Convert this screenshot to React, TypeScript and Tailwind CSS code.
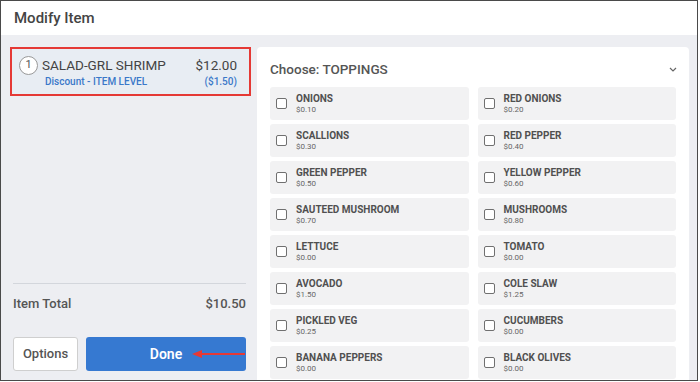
import React from "react";

interface Topping {
  name: string;
  price: string;
}

const toppings: Topping[] = [
  { name: "ONIONS", price: "$0.10" },
  { name: "RED ONIONS", price: "$0.20" },
  { name: "SCALLIONS", price: "$0.30" },
  { name: "RED PEPPER", price: "$0.40" },
  { name: "GREEN PEPPER", price: "$0.50" },
  { name: "YELLOW PEPPER", price: "$0.60" },
  { name: "SAUTEED MUSHROOM", price: "$0.70" },
  { name: "MUSHROOMS", price: "$0.80" },
  { name: "LETTUCE", price: "$0.00" },
  { name: "TOMATO", price: "$0.00" },
  { name: "AVOCADO", price: "$1.50" },
  { name: "COLE SLAW", price: "$1.25" },
  { name: "PICKLED VEG", price: "$0.25" },
  { name: "CUCUMBERS", price: "$0.00" },
  { name: "BANANA PEPPERS", price: "$0.00" },
  { name: "BLACK OLIVES", price: "$0.00" },
];

const ToppingOption: React.FC<{ topping: Topping }> = ({ topping }) => (
  <div className="h-[33px] rounded-[3px] bg-[#f2f2f3] flex items-center pl-[6px]">
    <div className="w-[11px] h-[11px] border-[1.5px] border-[#707070] rounded-[2px] bg-white shrink-0" />
    <div className="ml-[9px] flex flex-col">
      <span className="text-[10px] leading-[12px] font-bold text-[#505050]">{topping.name}</span>
      <span className="text-[8px] leading-[10px] text-[#666]">{topping.price}</span>
    </div>
  </div>
);

const App: React.FC = () => {
  return (
    <div className="w-[700px] h-[382px] bg-white overflow-hidden font-['Roboto',sans-serif]">
      <div className="w-[698px] h-[381px] border border-[#4a4a4a] flex flex-col">
        {/* header */}
        <div className="h-[34px] shrink-0 bg-white flex items-center px-[13px] text-[15px] font-medium text-[#444]">
          Modify Item
        </div>

        <div className="flex-1 min-h-0 bg-[#edeef2] flex">
          {/* left column */}
          <div className="w-[256px] shrink-0 flex flex-col pt-[12px] pl-[9px] pr-[6px] pb-[9px]">
            <div className="border-2 border-[#e53935] bg-[#e8edf3] pt-[7px] pb-[7px] pl-[7px] pr-[12px]">
              <div className="h-[19px] flex items-center">
                <div className="w-[19px] h-[19px] rounded-full border border-[#999] bg-white flex items-center justify-center text-[11px] text-[#555]">
                  1
                </div>
                <span className="ml-[4px] text-[13.5px] text-[#444]">SALAD-GRL SHRIMP</span>
                <span className="ml-auto text-[13.5px] text-[#444]">$12.00</span>
              </div>
              <div className="h-[12px] flex items-center pl-[26px] text-[10px] font-medium text-[#3a78c9]">
                <span>Discount - ITEM LEVEL</span>
                <span className="ml-auto">($1.50)</span>
              </div>
            </div>

            <div className="flex-1" />

            <div className="pl-[3px] pr-[5px]">
              <div className="h-px bg-[#d3d6dc]" />
              <div className="mt-[10px] h-[20px] flex items-center justify-between text-[13px] font-medium text-[#555]">
                <span>Item Total</span>
                <span>$10.50</span>
              </div>
              <div className="mt-[23px] flex gap-[8px]">
                <button className="w-[65px] h-[34px] bg-white border border-[#cfcfcf] rounded-[3px] text-[13px] font-medium text-[#555]">
                  Options
                </button>
                <button className="relative flex-1 h-[34px] bg-[#3679d1] rounded-[3px] text-[14px] font-semibold text-white">
                  Done
                  <svg className="absolute left-[106px] top-[12px]" width="54" height="10" viewBox="0 0 54 10">
                    <path d="M0 5 L10 1 L10 9 Z" fill="#e53935" />
                    <line x1="9" y1="5" x2="53" y2="5" stroke="#e53935" strokeWidth="2" />
                  </svg>
                </button>
              </div>
            </div>
          </div>

          {/* toppings card */}
          <div className="w-[432px] shrink-0 mt-[12px] bg-white rounded-t-[4px] px-[13px] overflow-hidden">
            <div className="h-[40px] flex items-center pt-[6px] pb-[2px]">
              <span className="text-[13.5px] font-medium text-[#555]">Choose: TOPPINGS</span>
              <svg className="ml-auto mr-[-1px]" width="8" height="5" viewBox="0 0 8 5">
                <path d="M1 1 L4 4 L7 1" fill="none" stroke="#666" strokeWidth="1.2" />
              </svg>
            </div>
            <div className="grid grid-cols-2 gap-x-[9px] gap-y-[4px]">
              {toppings.map((t) => (
                <ToppingOption key={t.name} topping={t} />
              ))}
            </div>
          </div>
        </div>
      </div>
    </div>
  );
};

export default App;
